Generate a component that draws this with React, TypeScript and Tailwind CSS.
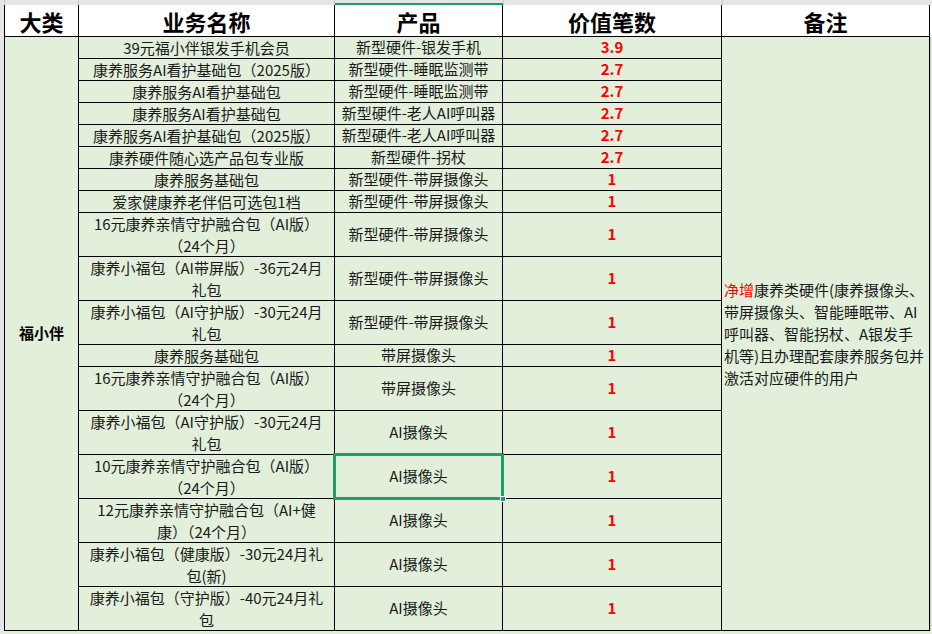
import React from "react";

const rows: { name: React.ReactNode; prod: string; v: string; h: number; sel?: boolean }[] = [
  { name: "39元福小伴银发手机会员", prod: "新型硬件-银发手机", v: "3.9", h: 22 },
  { name: "康养服务AI看护基础包（2025版）", prod: "新型硬件-睡眠监测带", v: "2.7", h: 22 },
  { name: "康养服务AI看护基础包", prod: "新型硬件-睡眠监测带", v: "2.7", h: 22 },
  { name: "康养服务AI看护基础包", prod: "新型硬件-老人AI呼叫器", v: "2.7", h: 22 },
  { name: "康养服务AI看护基础包（2025版）", prod: "新型硬件-老人AI呼叫器", v: "2.7", h: 22 },
  { name: "康养硬件随心选产品包专业版", prod: "新型硬件-拐杖", v: "2.7", h: 22 },
  { name: "康养服务基础包", prod: "新型硬件-带屏摄像头", v: "1", h: 22 },
  { name: "爱家健康养老伴侣可选包1档", prod: "新型硬件-带屏摄像头", v: "1", h: 22 },
  { name: <>16元康养亲情守护融合包（AI版）<br />（24个月）</>, prod: "新型硬件-带屏摄像头", v: "1", h: 44 },
  { name: <>康养小福包（AI带屏版）-36元24月<br />礼包</>, prod: "新型硬件-带屏摄像头", v: "1", h: 44 },
  { name: <>康养小福包（AI守护版）-30元24月<br />礼包</>, prod: "新型硬件-带屏摄像头", v: "1", h: 44 },
  { name: "康养服务基础包", prod: "带屏摄像头", v: "1", h: 22 },
  { name: <>16元康养亲情守护融合包（AI版）<br />（24个月）</>, prod: "带屏摄像头", v: "1", h: 44 },
  { name: <>康养小福包（AI守护版）-30元24月<br />礼包</>, prod: "AI摄像头", v: "1", h: 44 },
  { name: <>10元康养亲情守护融合包（AI版）<br />（24个月）</>, prod: "AI摄像头", v: "1", h: 44, sel: true },
  { name: <>12元康养亲情守护融合包（AI+健<br />康）（24个月）</>, prod: "AI摄像头", v: "1", h: 44 },
  { name: <>康养小福包（健康版）-30元24月礼<br />包(新)</>, prod: "AI摄像头", v: "1", h: 44 },
  { name: <>康养小福包（守护版）-40元24月礼<br />包</>, prod: "AI摄像头", v: "1", h: 44 },
];

export default function App() {
  const template = `5px 32px ${rows.map((r) => r.h + "px").join(" ")}`;
  return (
    <div
      className="w-[932px] h-[634px] overflow-hidden bg-[#e2efda] text-[15px] text-[#1a1a1a]"
      style={{ fontFamily: '"Noto Sans CJK SC", "Liberation Sans", sans-serif' }}
    >
      <div
        className="grid grid-cols-[5px_74px_256px_168px_219px_208px_2px]"
        style={{ gridTemplateRows: template }}
      >
        {/* top strip */}
        <div className="bg-[#e6e6e6] border-r border-[#c8c8c8]" />
        <div className="bg-[#e6e6e6] border-r border-[#c8c8c8]" />
        <div className="bg-[#e6e6e6] border-r border-[#c8c8c8]" />
        <div className="bg-[#e6e6e6] border-b-2 border-[#1b9e6a]" />
        <div className="bg-[#e6e6e6] border-l border-[#c8c8c8]" />
        <div className="bg-[#e6e6e6] border-l border-[#c8c8c8]" />
        <div className="bg-[#e6e6e6]" />

        {/* header */}
        <div className="bg-[#e6e6e6] border-r border-black" style={{ gridRow: "2 / span 19" }} />
        {["大类", "业务名称", "产品", "价值笔数", "备注"].map((t) => (
          <div
            key={t}
            className="bg-white border-r border-b border-black flex items-center justify-center text-[22px] font-bold leading-none text-black"
          >
            {t}
          </div>
        ))}
        <div className="bg-white" />

        {/* category */}
        <div
          className="border-r border-b border-black flex items-center justify-center font-bold text-[15px] text-black"
          style={{ gridColumn: 2, gridRow: "3 / span 18" }}
        >
          福小伴
        </div>

        {rows.map((r, i) => (
          <React.Fragment key={i}>
            <div
              className="border-r border-b border-black flex items-center justify-center text-center leading-[22px] whitespace-nowrap"
              style={{ gridColumn: 3, gridRow: i + 3 }}
            >
              <span>{r.name}</span>
            </div>
            <div
              className="relative border-r border-b border-black flex items-center justify-center whitespace-nowrap"
              style={{ gridColumn: 4, gridRow: i + 3 }}
            >
              {r.prod}
              {r.sel && (
                <>
                  <div className="absolute z-10 -left-[2px] -top-[2px] -right-[2px] -bottom-[2px] border-[3px] border-[#1b9e6a]" />
                  <div className="absolute z-20 -right-[4px] -bottom-[4px] w-[6px] h-[6px] bg-[#1b9e6a] border border-white" />
                </>
              )}
            </div>
            <div
              className="border-r border-b border-black flex items-center justify-center font-bold text-[#ff0000]"
              style={{ gridColumn: 5, gridRow: i + 3 }}
            >
              {r.v}
            </div>
          </React.Fragment>
        ))}

        {/* remark */}
        <div
          className="border-r border-b border-black flex items-center pl-[2px] leading-[22px] text-[15px] whitespace-nowrap"
          style={{ gridColumn: 6, gridRow: "3 / span 18" }}
        >
          <div>
            <span className="text-[#ff0000]">净增</span>康养类硬件(康养摄像头、<br />
            带屏摄像头、智能睡眠带、AI<br />
            呼叫器、智能拐杖、A银发手<br />
            机等)且办理配套康养服务包并<br />
            激活对应硬件的用户
          </div>
        </div>
        <div className="border-l border-[#c8c8c8]" style={{ gridColumn: 7, gridRow: "3 / span 18" }} />
      </div>
    </div>
  );
}
